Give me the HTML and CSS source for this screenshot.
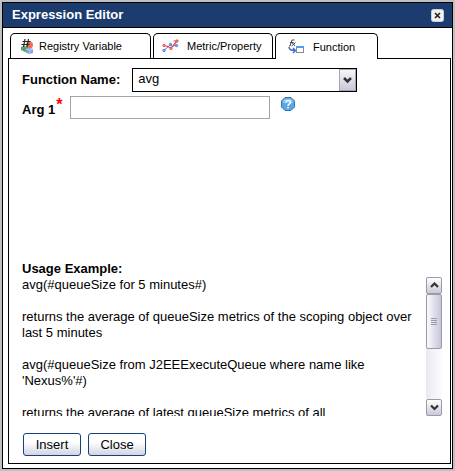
FILE: index.html
```html
<!DOCTYPE html>
<html lang="en">
<head>
    <meta charset="UTF-8">
    <meta name="viewport" content="width=device-width, initial-scale=1.0">
    <title>Expression Editor</title>
    <link rel="stylesheet" href="styles.css">
</head>
<body>
    <div class="window">
        <div class="titlebar">
            <h1>Expression Editor</h1>
            <button type="button" class="close" aria-label="Close window">
                <svg width="13" height="13" viewBox="0 0 13 13">
                    <rect x="0.5" y="0.5" width="12" height="12" rx="2" fill="#f1f1f1" stroke="#c9ced8"/>
                    <path d="M4 4L9 9M9 4L4 9" stroke="#222" stroke-width="1.6"/>
                </svg>
            </button>
        </div>
        <div class="content">
            <div class="tabs" role="tablist">
                <button type="button" class="tab tab-registry" role="tab">
                    <svg width="14" height="16" viewBox="0 0 14 16">
                        <circle cx="8.5" cy="7" r="3.5" fill="#ef6e58"/>
                        <path d="M0 9l3-1 4 1v4l-3 1-4-2z" fill="#619c70"/>
                        <path d="M5 11l4-1 3 1v4l-3 1-4-1z" fill="#7fa6e4"/>
                        <path d="M5 11l4 1 3-1M9 12v4" stroke="#b8cef0" fill="none"/>
                        <path d="M4 1L2.5 9M7.5 1L6 9M1.5 3.5h8M0.5 6.5h8" stroke="#292929" stroke-width="1.2" fill="none"/>
                    </svg>
                    <span>Registry Variable</span>
                </button>
                <button type="button" class="tab tab-metric" role="tab">
                    <svg width="17" height="14" viewBox="0 0 17 14">
                        <path d="M2 11.5L8.5 5.5L10 7.5L14.5 6" stroke="#4a78cf" fill="none"/>
                        <path d="M2 6.500L6 7.500L9 9.500L11.500 6L15 2L11.500 2" stroke="#e8474a" stroke-width="1.2" fill="none"/>
                        <g fill="#7fa2e6" stroke="#4a78cf" stroke-width="0.8">
                            <circle cx="2" cy="11.5" r="1.2"/>
                            <circle cx="8.5" cy="5.5" r="1.2"/>
                            <circle cx="14.5" cy="6.5" r="1.2"/>
                        </g>
                        <g fill="#f28b86" stroke="#e8474a" stroke-width="0.8">
                            <circle cx="2" cy="6.5" r="1.2"/>
                            <circle cx="9" cy="9.5" r="1.2"/>
                            <circle cx="15" cy="2" r="1.2"/>
                        </g>
                    </svg>
                    <span>Metric/Property</span>
                </button>
                <button type="button" class="tab tab-function active" role="tab" aria-selected="true">
                    <svg width="17" height="15" viewBox="0 0 17 15">
                        <path d="M1 7h1L4 1h2.5M2 3.5h3.500M4 3.5l3 3.500M7.500 3.500L3.500 7" stroke="#444" fill="none"/>
                        <path d="M1 8c0 3 2 3.500 6 3.500M5 9l2.500 2.500L5 14" stroke="#386bc4" stroke-width="1.4" fill="none"/>
                        <rect x="8.5" y="7.5" width="7" height="6" fill="#fff" stroke="#858b91"/>
                        <path d="M8 8h8" stroke="#4f9ce8" stroke-width="2"/>
                    </svg>
                    <span>Function</span>
                </button>
            </div>
            <form class="panel" onsubmit="return false">
                <div class="row">
                    <label for="function">Function Name:</label>
                    <div class="select">
                        <select id="function">
                            <option>avg</option>
                        </select>
                        <span class="arrow">
                            <svg width="9" height="7" viewBox="0 0 9 7"><path d="M1 1l3.5 3.5L8 1" stroke="#333" stroke-width="2.5" fill="none"/></svg>
                        </span>
                    </div>
                </div>
                <div class="row arg">
                    <label for="arg1">Arg 1<span class="required">*</span></label>
                    <input type="text" id="arg1">
                    <button type="button" class="help" aria-label="Help">
                        <svg width="14" height="14" viewBox="0 0 14 14">
                            <path d="M4 0.5h6L13.5 4v6L10 13.5H4L0.5 10V4z" fill="#5ba7e4" stroke="#3976b5"/>
                            <path d="M2 4l2-2h6l2 2v2H2z" fill="#8bc5f1"/>
                            <path d="M5 5.5c0-3 4.5-2.5 4.5 0C9.5 7 7 6.8 7 9M7 10v1.5" stroke="#fff" stroke-width="1.5" fill="none"/>
                        </svg>
                    </button>
                </div>
                <h2>Usage Example:</h2>
                <div class="usage">
                    <div class="usage-text">
                        <p>avg(#queueSize for 5 minutes#)</p>
                        <p>returns the average of queueSize metrics of the scoping object over last 5 minutes</p>
                        <p>avg(#queueSize from J2EEExecuteQueue where name like 'Nexus%'#)</p>
                        <p>returns the average of latest queueSize metrics of all</p>
                    </div>
                    <div class="scrollbar">
                        <span class="scroll-end">
                            <svg width="9" height="7" viewBox="0 0 9 7"><path d="M1 5l3.5-3.5L8 5" stroke="#333" stroke-width="2.2" fill="none"/></svg>
                        </span>
                        <span class="thumb">
                            <svg width="7" height="8" viewBox="0 0 7 8"><path d="M0 0.5h6M0 2.5h6M0 4.5h6M0 6.5h6" stroke="#9c9ca8"/></svg>
                        </span>
                        <span class="scroll-end down">
                            <svg width="9" height="7" viewBox="0 0 9 7"><path d="M1 1.5l3.5 3.5L8 1.5" stroke="#333" stroke-width="2.2" fill="none"/></svg>
                        </span>
                    </div>
                </div>
                <div class="buttons">
                    <button type="button" class="btn">Insert</button>
                    <button type="button" class="btn">Close</button>
                </div>
            </form>
        </div>
    </div>
</body>
</html>
```
FILE: styles.css
```css
* {
    box-sizing: border-box;
}
body {
    margin: 0;
    padding: 2px;
    min-height: 100vh;
    display: flex;
    background: #c0c0c0;
    color: #000;
    font-family: "Liberation Sans", Arial, sans-serif;
    font-size: 13px;
    line-height: 16px;
}
button, input, select {
    font: inherit;
    color: inherit;
}
svg {
    display: block;
    flex: none;
}
h1, h2, p {
    margin: 0;
}
.window {
    flex: 1;
    min-width: 0;
    display: flex;
    flex-direction: column;
    border: 1px solid #000;
    background: #fff;
}
.titlebar {
    display: flex;
    align-items: center;
    justify-content: space-between;
    height: 25px;
    padding: 0 8px 0 9px;
    background: #1c3c70;
    border-bottom: 1px solid #000;
}
.titlebar h1 {
    color: #fff;
    font-size: 13px;
}
.close, .help {
    padding: 0;
    border: 0;
    background: none;
}
.content {
    flex: 1;
    display: flex;
    flex-direction: column;
    padding: 5px 1px 4px 5px;
}
.tabs {
    display: flex;
    gap: 2px;
    padding-left: 2px;
}
.tab {
    display: flex;
    align-items: center;
    height: 25px;
    padding: 0 0 0 10px;
    border: 1px solid #000;
    border-bottom: 0;
    border-radius: 5px 5px 0 0;
    background: #fff;
    font-size: 11px;
    white-space: nowrap;
}
.tab-registry {
    width: 141px;
    gap: 4px;
}
.tab-metric {
    width: 120px;
    padding-left: 8px;
    gap: 8px;
}
.tab-function {
    width: 103px;
    padding-left: 12px;
    gap: 8px;
}
.tab.active {
    height: 26px;
    margin-bottom: -1px;
    z-index: 1;
}
.panel {
    flex: 1;
    padding: 9px 8px 7px 13px;
    border: 1px solid #000;
}
.row {
    display: flex;
    align-items: center;
}
.row label, .panel h2 {
    font-size: 13px;
    font-weight: bold;
}
.select {
    position: relative;
    width: 225px;
    margin-left: 12px;
}
.select select {
    display: block;
    width: 100%;
    height: 24px;
    padding: 0 20px 2px 5px;
    border: 1px solid #000;
    border-radius: 0;
    background: #fff;
    appearance: none;
}
.arrow {
    position: absolute;
    top: 1px;
    right: 1px;
    bottom: 1px;
    width: 17px;
    display: flex;
    align-items: center;
    justify-content: center;
    border: 1px solid #a5a5b1;
    background: linear-gradient(#f6f6fa, #c8c8d8);
    pointer-events: none;
}
.arg {
    align-items: flex-start;
    margin-top: 4px;
}
.arg label {
    width: 48px;
    padding-top: 6px;
}
.required {
    margin-left: 1px;
    color: #f00;
    font-size: 16px;
    line-height: 0;
    vertical-align: 4px;
}
.arg input {
    width: 200px;
    height: 23px;
    padding: 0 4px;
    border: 1px solid #a4a4a4;
    background: #fff;
}
.help {
    margin: 1px 0 0 11px;
}
.panel h2 {
    margin-top: 142px;
}
.usage {
    display: flex;
    height: 139px;
}
.usage-text {
    flex: 1;
    overflow: hidden;
    padding-right: 12px;
}
.usage-text p {
    margin-bottom: 16px;
}
.scrollbar {
    display: flex;
    flex-direction: column;
    width: 16px;
    background: linear-gradient(90deg, #e9e9f3, #fcfcfe);
}
.scroll-end, .thumb {
    display: flex;
    align-items: center;
    justify-content: center;
    border: 1px solid #9a9aa8;
    border-radius: 2px;
}
.scroll-end {
    height: 17px;
    background: linear-gradient(#fff, #c9c9da);
}
.thumb {
    height: 55px;
    background: linear-gradient(90deg, #fafafd, #c6c6da);
}
.down {
    margin-top: auto;
}
.buttons {
    display: flex;
    gap: 7px;
    margin-top: 17px;
    padding-left: 1px;
}
.btn {
    width: 58px;
    height: 23px;
    padding: 0;
    border: 1px solid #174278;
    border-radius: 3px;
    background: linear-gradient(#fff 40%, #d3d3e4);
}
.btn:active {
    background: #d3d3e4;
}
```
